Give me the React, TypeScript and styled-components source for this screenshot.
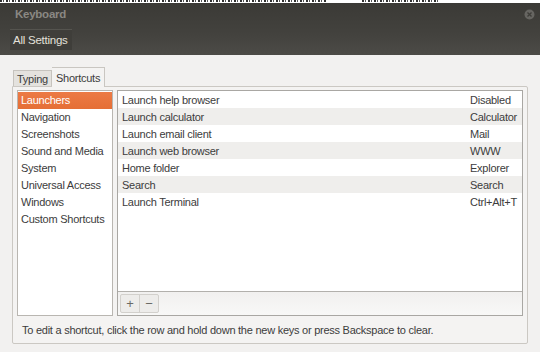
import React from 'react'
import styled, { createGlobalStyle } from 'styled-components'

const GlobalStyle = createGlobalStyle`
  html, body {
    margin: 0;
    padding: 0;
    background: #f2f1f0;
  }
  body {
    font-family: "Liberation Sans", "DejaVu Sans", sans-serif;
    font-size: 11px;
    letter-spacing: -0.25px;
    color: #3c3c3c;
  }
`

type Shortcut = { name: string, keys: string }

const categories = [
  'Launchers',
  'Navigation',
  'Screenshots',
  'Sound and Media',
  'System',
  'Universal Access',
  'Windows',
  'Custom Shortcuts',
]

const shortcuts: Shortcut[] = [
  { name: 'Launch help browser', keys: 'Disabled' },
  { name: 'Launch calculator', keys: 'Calculator' },
  { name: 'Launch email client', keys: 'Mail' },
  { name: 'Launch web browser', keys: 'WWW' },
  { name: 'Home folder', keys: 'Explorer' },
  { name: 'Search', keys: 'Search' },
  { name: 'Launch Terminal', keys: 'Ctrl+Alt+T' },
]

export default function App() {
  return (
    <>
      <GlobalStyle />
      <Window>
        {/* bottom edge of whatever sits above the window */}
        <CutStrip>
          <Scribble w={326} />
          <Scribble w={76} gap={36} />
        </CutStrip>
        <TitleBar>
          <TitleRow>
            <Title>Keyboard</Title>
            <CloseButton>
              <svg width="11" height="11" viewBox="0 0 11 11">
                <circle cx="5.5" cy="5.5" r="5" fill="#6b6a66" />
                <path d="M3.5 3.5 L7.5 7.5 M7.5 3.5 L3.5 7.5" stroke="#3e3d39" strokeWidth="1.3" />
              </svg>
            </CloseButton>
          </TitleRow>
          <Toolbar>
            <AllSettings>All Settings</AllSettings>
          </Toolbar>
        </TitleBar>

        <Content>
          <Tabs>
            <Tab>Typing</Tab>
            <Tab active>Shortcuts</Tab>
          </Tabs>
          <Notebook>
            <Panes>
              <CategoryList>
                {categories.map((c, i) => (
                  <CategoryItem key={c} selected={i === 0}>{c}</CategoryItem>
                ))}
              </CategoryList>
              <ShortcutPanel>
                <ShortcutRows>
                  {shortcuts.map((s, i) => (
                    <ShortcutRow key={s.name} odd={i % 2 === 1}>
                      <span>{s.name}</span>
                      <KeyCell>{s.keys}</KeyCell>
                    </ShortcutRow>
                  ))}
                </ShortcutRows>
                <ListToolbar>
                  <ToolButtons>
                    <ToolButton>+</ToolButton>
                    <ToolButton>−</ToolButton>
                  </ToolButtons>
                </ListToolbar>
              </ShortcutPanel>
            </Panes>
            <Hint>To edit a shortcut, click the row and hold down the new keys or press Backspace to clear.</Hint>
          </Notebook>
        </Content>
      </Window>
    </>
  )
}

const Window = styled.div`
  width: 540px;
  height: 352px;
  overflow: hidden;
  background: #f2f1f0;
`

const CutStrip = styled.div`
  height: 3px;
  background: #fff;
  display: flex;
`

const Scribble = styled.div<{ w: number, gap?: number }>`
  width: ${p => p.w}px;
  margin-left: ${p => p.gap || 0}px;
  height: 2px;
  background: repeating-linear-gradient(to right, #333 0 2px, transparent 2px 3px, #555 3px 4px, transparent 4px 6px);
`

const TitleBar = styled.div`
  height: 52px;
  background: linear-gradient(to bottom, #3b3a36 0%, #43423e 60%, #4c4b47 100%);
  display: flex;
  flex-direction: column;
`

const TitleRow = styled.div`
  height: 22px;
  display: flex;
  align-items: center;
  justify-content: space-between;
  padding: 0 5px 0 15px;
`

const Title = styled.div`
  font-weight: 700;
  font-size: 11.5px;
  color: #8a8883;
`

const CloseButton = styled.div`
  display: flex;
  align-items: center;
  opacity: 0.9;
`

const Toolbar = styled.div`
  display: flex;
  align-items: center;
  padding: 4px 0 0 10px;
`

const AllSettings = styled.div`
  height: 20px;
  padding: 0 4px 0 3px;
  display: flex;
  align-items: center;
  background: #3f3e3a;
  border-top: 1px solid #55544f;
  color: #e4e1da;
  font-size: 11.5px;
`

const Content = styled.div`
  padding: 12px 12px 0 12px;
`

const Tabs = styled.div`
  display: flex;
  align-items: flex-end;
  height: 19px;
  padding-left: 1px;
`

const Tab = styled.div<{ active?: boolean }>`
  height: ${p => (p.active ? '19px' : '15px')};
  padding: 0 ${p => (p.active ? '4px' : '3px')};
  display: flex;
  align-items: center;
  border: 1px solid ${p => (p.active ? '#c9c6c1' : '#c6c3be')};
  border-bottom: none;
  border-left: ${p => (p.active ? 'none' : '1px solid #c6c3be')};
  background: ${p => (p.active ? '#f4f3f2' : '#e4e2de')};
  color: #3c3c3c;
  margin-bottom: ${p => (p.active ? '-1px' : '0')};
  position: relative;
`

const Notebook = styled.div`
  width: 516px;
  height: 258px;
  box-sizing: border-box;
  border: 1px solid #cbc8c3;
  border-radius: 0 2px 2px 2px;
  background: #f4f3f2;
  padding: 3px 4px 0 4px;
`

const Panes = styled.div`
  display: flex;
  gap: 4px;
  height: 226px;
`

const CategoryList = styled.div`
  width: 96px;
  box-sizing: border-box;
  border: 1px solid #b9b6b1;
  background: #fff;
  padding-top: 1px;
`

const CategoryItem = styled.div<{ selected?: boolean }>`
  height: 17px;
  line-height: 17px;
  padding-left: 3px;
  white-space: nowrap;
  color: ${p => (p.selected ? '#fff' : '#3c3c3c')};
  background: ${p => (p.selected ? 'linear-gradient(to bottom, #ec7a45, #e56f36)' : 'transparent')};
`

const ShortcutPanel = styled.div`
  flex: 1;
  box-sizing: border-box;
  border: 1px solid #a9a7a3;
  background: #fff;
  display: flex;
  flex-direction: column;
`

const ShortcutRows = styled.div`
  flex: 1;
`

const ShortcutRow = styled.div<{ odd?: boolean }>`
  height: 17px;
  display: flex;
  align-items: center;
  justify-content: space-between;
  padding: 0 0 0 4px;
  background: ${p => (p.odd ? '#efeeec' : '#fff')};
`

const KeyCell = styled.span`
  width: 52px;
  white-space: nowrap;
`

const ListToolbar = styled.div`
  height: 23px;
  border-top: 1px solid #b2b0ac;
  background: linear-gradient(to bottom, #f1f0ef, #f8f8f7);
  display: flex;
  align-items: center;
  padding-left: 2px;
`

const ToolButtons = styled.div`
  display: flex;
  border: 1px solid #d2d0cc;
  border-radius: 2px;
  background: #edecea;
`

const ToolButton = styled.div`
  width: 18px;
  height: 17px;
  display: flex;
  align-items: center;
  justify-content: center;
  color: #6a6965;
  font-size: 13px;
  & + & {
    border-left: 1px solid #d2d0cc;
  }
`

const Hint = styled.div`
  padding: 8px 0 0 5px;
  color: #3c3c3c;
  white-space: nowrap;
`
